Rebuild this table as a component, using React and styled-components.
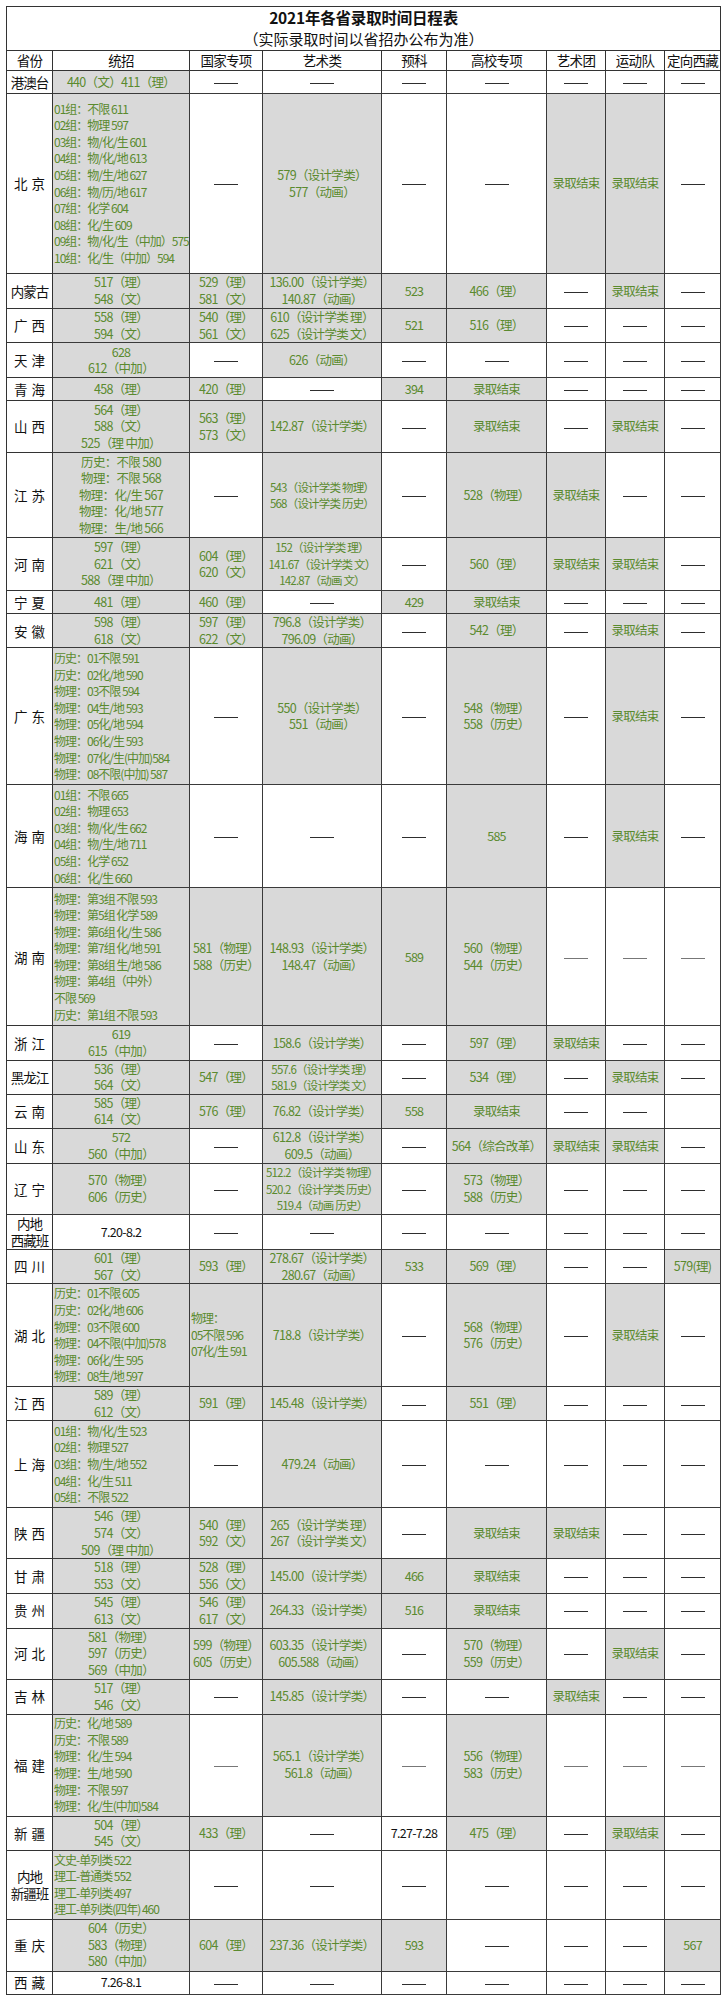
import React from 'react';
import styled, { createGlobalStyle } from 'styled-components';

const GlobalStyle = createGlobalStyle`
  body {
    margin: 0;
    background: #ffffff;
  }
`;

const Page = styled.div`
  padding: 6px 0 7px 6px;
`;

const Table = styled.table`
  border-collapse: collapse;
  table-layout: fixed;
  width: 714px;
  font-family: "Noto Sans CJK SC", "Noto Sans", sans-serif;
  border: 1px solid #333;
`;

const Col = styled.col`
  width: ${props => props.$w}px;
`;

const Row = styled.tr`
  height: ${props => props.$h}px;
`;

const TitleCell = styled.td`
  height: 43px;
  text-align: center;
  border: 1px solid #333;
  color: #111;
  padding: 0;
`;

const Title = styled.div`
  font-size: 15.5px;
  font-weight: 700;
  line-height: 21px;
  letter-spacing: -0.2px;
`;

const Subtitle = styled.div`
  font-size: 15px;
  line-height: 22px;
`;

const HeadCell = styled.th`
  font-weight: 400;
  font-size: 13.5px;
  line-height: 17px;
  color: #111;
  border: 1px solid #333;
  padding: 0;
  white-space: nowrap;
  letter-spacing: -0.7px;
`;

const NameCell = styled.td`
  font-size: 13.5px;
  line-height: 16.5px;
  color: #111;
  text-align: center;
  border: 1px solid #333;
  padding: 0;
  white-space: nowrap;
  letter-spacing: ${props => (props.$short ? '4px' : '-1px')};
  text-indent: ${props => (props.$short ? '4px' : '0')};
`;

const Cell = styled.td`
  background: ${props => (props.$shade ? '#d9d9d9' : '#ffffff')};
  color: ${props => (props.$dark ? '#111' : '#5a8a2e')};
  text-align: ${props => (props.$left ? 'left' : 'center')};
  font-size: ${props => (props.$small ? '11.5px' : props.$left ? '12px' : '12.5px')};
  letter-spacing: ${props => (props.$left ? '-1px' : props.$small ? '-0.8px' : '-0.7px')};
  line-height: 16.6px;
  padding: 0 ${props => (props.$left ? '1px' : '2px')};
  border: 1px solid #3a3a3a;
  vertical-align: middle;
  white-space: nowrap;
  overflow: visible;
`;

const Line = styled.div``;

const Dash = styled.span`
  display: inline-block;
  width: 24px;
  border-top: 1.5px solid ${props => (props.$soft ? '#777' : '#2e2e2e')};
  vertical-align: middle;
`;

// cell helpers
const g = text => ({ text, shade: true });
const gl = text => ({ text, shade: true, left: true });
const gs = text => ({ text, shade: true, small: true });
const dark = text => ({ text, dark: true });
const D = { dash: true };
const DONE = g('录取结束');
const EMPTY = { text: '' };

const columns = [
  ['省份', 46], ['统招', 137], ['国家专项', 73], ['艺术类', 119], ['预科', 65],
  ['高校专项', 100], ['艺术团', 59], ['运动队', 59], ['定向西藏', 56],
];

const rows = [
  { name: '港澳台', h: 23, cells: [g('440（文）411（理）'), D, D, D, D, D, D, D] },
  {
    name: '北京', h: 180,
    cells: [
      gl(['01组：不限 611', '02组：物理 597', '03组：物/化/生 601', '04组：物/化/地 613', '05组：物/生/地 627',
        '06组：物/历/地 617', '07组：化学 604', '08组：化/生 609', '09组：物/化/生（中加）575', '10组：化/生（中加）594']),
      D, g(['579（设计学类）', '577（动画）']), D, D, DONE, DONE, D,
    ],
  },
  { name: '内蒙古', h: 35, cells: [g(['517（理）', '548（文）']), g(['529（理）', '581（文）']), g(['136.00（设计学类）', '140.87（动画）']), g('523'), g('466（理）'), D, DONE, D] },
  { name: '广西', h: 34, cells: [g(['558（理）', '594（文）']), g(['540（理）', '561（文）']), g(['610（设计学类 理）', '625（设计学类 文）']), g('521'), g('516（理）'), D, D, D] },
  { name: '天津', h: 35, cells: [g(['628', '612（中加）']), D, g('626（动画）'), D, D, D, D, D] },
  { name: '青海', h: 23, cells: [g('458（理）'), g('420（理）'), D, g('394'), DONE, D, D, D] },
  { name: '山西', h: 52, cells: [g(['564（理）', '588（文）', '525（理 中加）']), g(['563（理）', '573（文）']), g('142.87（设计学类）'), D, DONE, D, DONE, D] },
  {
    name: '江苏', h: 85,
    cells: [
      g(['历史：不限 580', '物理：不限 568', '物理：化/生 567', '物理：化/地 577', '物理：生/地 566']),
      D, gs(['543（设计学类 物理）', '568（设计学类 历史）']), D, g('528（物理）'), DONE, D, D,
    ],
  },
  { name: '河南', h: 53, cells: [g(['597（理）', '621（文）', '588（理 中加）']), g(['604（理）', '620（文）']), gs(['152（设计学类 理）', '141.67（设计学类 文）', '142.87（动画 文）']), D, g('560（理）'), DONE, DONE, D] },
  { name: '宁夏', h: 23, cells: [g('481（理）'), g('460（理）'), D, g('429'), DONE, D, D, D] },
  { name: '安徽', h: 34, cells: [g(['598（理）', '618（文）']), g(['597（理）', '622（文）']), g(['796.8（设计学类）', '796.09（动画）']), D, g('542（理）'), D, DONE, D] },
  {
    name: '广东', h: 137,
    cells: [
      gl(['历史：01不限 591', '历史：02化/地 590', '物理：03不限 594', '物理：04生/地 593', '物理：05化/地 594',
        '物理：06化/生 593', '物理：07化/生(中加)584', '物理：08不限(中加) 587']),
      D, g(['550（设计学类）', '551（动画）']), D, g(['548（物理）', '558（历史）']), D, DONE, D,
    ],
  },
  {
    name: '海南', h: 103,
    cells: [
      gl(['01组：不限 665', '02组：物理 653', '03组：物/化/生 662', '04组：物/生/地 711', '05组：化学 652', '06组：化/生 660']),
      D, D, D, g('585'), D, DONE, D,
    ],
  },
  {
    name: '湖南', h: 138, soft: true,
    cells: [
      gl(['物理：第3组 不限 593', '物理：第5组 化学 589', '物理：第6组 化/生 586', '物理：第7组 化/地 591',
        '物理：第8组 生/地 586', '物理：第4组（中外）', '不限 569', '历史：第1组 不限 593']),
      g(['581（物理）', '588（历史）']), g(['148.93（设计学类）', '148.47（动画）']), g('589'), g(['560（物理）', '544（历史）']), D, D, D,
    ],
  },
  { name: '浙江', h: 34, cells: [g(['619', '615（中加）']), D, g('158.6（设计学类）'), D, g('597（理）'), DONE, D, D] },
  { name: '黑龙江', h: 34, cells: [g(['536（理）', '564（文）']), g('547（理）'), gs(['557.6（设计学类 理）', '581.9（设计学类 文）']), D, g('534（理）'), D, DONE, D] },
  { name: '云南', h: 34, cells: [g(['585（理）', '614（文）']), g('576（理）'), g('76.82（设计学类）'), g('558'), DONE, D, D, EMPTY] },
  { name: '山东', h: 35, cells: [g(['572', '560（中加）']), D, g(['612.8（设计学类）', '609.5（动画）']), D, g('564（综合改革）'), DONE, DONE, D] },
  { name: '辽宁', h: 51, cells: [g(['570（物理）', '606（历史）']), D, gs(['512.2（设计学类 物理）', '520.2（设计学类 历史）', '519.4（动画 历史）']), D, g(['573（物理）', '588（历史）']), D, D, D] },
  { name: ['内地', '西藏班'], h: 35, cells: [dark('7.20-8.2'), D, D, D, D, D, D, D] },
  { name: '四川', h: 34, cells: [g(['601（理）', '567（文）']), g('593（理）'), g(['278.67（设计学类）', '280.67（动画）']), g('533'), g('569（理）'), D, D, g('579(理)')] },
  {
    name: '湖北', h: 103,
    cells: [
      gl(['历史：01不限 605', '历史：02化/地 606', '物理：03不限 600', '物理：04不限(中加)578', '物理：06化/生 595', '物理：08生/地 597']),
      gl(['物理：', '05不限 596', '07化/生 591']), g('718.8（设计学类）'), D, g(['568（物理）', '576（历史）']), D, DONE, D,
    ],
  },
  { name: '江西', h: 34, cells: [g(['589（理）', '612（文）']), g('591（理）'), g('145.48（设计学类）'), D, g('551（理）'), D, D, D] },
  {
    name: '上海', h: 87,
    cells: [
      gl(['01组：物/化/生 523', '02组：物理 527', '03组：物/生/地 552', '04组：化/生 511', '05组：不限 522']),
      D, g('479.24（动画）'), D, D, D, D, D,
    ],
  },
  { name: '陕西', h: 51, cells: [g(['546（理）', '574（文）', '509（理 中加）']), g(['540（理）', '592（文）']), g(['265（设计学类 理）', '267（设计学类 文）']), D, DONE, DONE, D, D] },
  { name: '甘肃', h: 34, cells: [g(['518（理）', '553（文）']), g(['528（理）', '556（文）']), g('145.00（设计学类）'), g('466'), DONE, D, D, D] },
  { name: '贵州', h: 35, cells: [g(['545（理）', '613（文）']), g(['546（理）', '617（文）']), g('264.33（设计学类）'), g('516'), DONE, D, D, D] },
  { name: '河北', h: 51, cells: [g(['581（物理）', '597（历史）', '569（中加）']), g(['599（物理）', '605（历史）']), g(['603.35（设计学类）', '605.588（动画）']), D, g(['570（物理）', '559（历史）']), D, DONE, D] },
  { name: '吉林', h: 35, cells: [g(['517（理）', '546（文）']), D, g('145.85（设计学类）'), D, D, DONE, D, D] },
  {
    name: '福建', h: 102, soft: true,
    cells: [
      gl(['历史：化/地 589', '历史：不限 589', '物理：化/生 594', '物理：生/地 590', '物理：不限 597', '物理：化/生(中加)584']),
      D, g(['565.1（设计学类）', '561.8（动画）']), D, g(['556（物理）', '583（历史）']), D, D, D,
    ],
  },
  { name: '新疆', h: 34, cells: [g(['504（理）', '545（文）']), g('433（理）'), D, dark('7.27-7.28'), g('475（理）'), D, DONE, D] },
  {
    name: ['内地', '新疆班'], h: 69,
    cells: [gl(['文史-单列类 522', '理工-普通类 552', '理工-单列类 497', '理工-单列类(四年) 460']), D, D, D, D, D, D, D],
  },
  { name: '重庆', h: 52, cells: [g(['604（历史）', '583（物理）', '580（中加）']), g('604（理）'), g('237.36（设计学类）'), g('593'), D, D, D, g('567')] },
  { name: '西藏', h: 23, cells: [dark('7.26-8.1'), D, D, D, D, D, D, D] },
];

const Lines = ({ text }) =>
  Array.isArray(text) ? text.map((t, i) => <Line key={i}>{t}</Line>) : text;

function App() {
  return (
    <Page>
      <GlobalStyle />
      <Table>
        <colgroup>
          {columns.map(([label, w]) => <Col key={label} $w={w} />)}
        </colgroup>
        <tbody>
          <tr>
            <TitleCell colSpan={9}>
              <Title>2021年各省录取时间日程表</Title>
              <Subtitle>（实际录取时间以省招办公布为准）</Subtitle>
            </TitleCell>
          </tr>
          <Row $h={20}>
            {columns.map(([label]) => <HeadCell key={label}>{label}</HeadCell>)}
          </Row>
          {rows.map((row, ri) => (
            <Row key={ri} $h={row.h}>
              <NameCell $short={typeof row.name === 'string' && row.name.length === 2}>
                <Lines text={row.name} />
              </NameCell>
              {row.cells.map((c, ci) => (
                <Cell key={ci} $shade={c.shade} $left={c.left} $small={c.small} $dark={c.dark}>
                  {c.dash ? <Dash $soft={row.soft} /> : <Lines text={c.text} />}
                </Cell>
              ))}
            </Row>
          ))}
        </tbody>
      </Table>
    </Page>
  );
}

export default App;
